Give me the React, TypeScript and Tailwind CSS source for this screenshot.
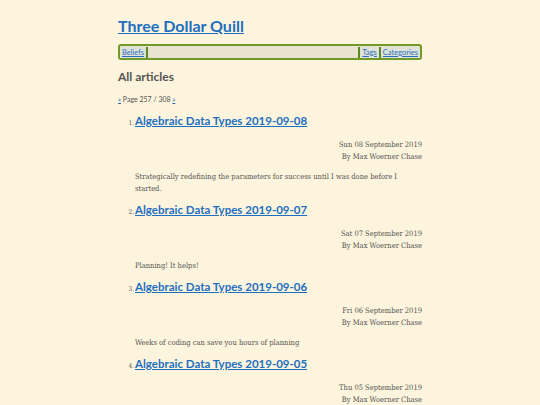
import React from "react";

const articles = [
  { n: 1, title: "Algebraic Data Types 2019-09-08", date: "Sun 08 September 2019", summary: "Strategically redefining the parameters for success until I was done before I started." },
  { n: 2, title: "Algebraic Data Types 2019-09-07", date: "Sat 07 September 2019", summary: "Planning! It helps!" },
  { n: 3, title: "Algebraic Data Types 2019-09-06", date: "Fri 06 September 2019", summary: "Weeks of coding can save you hours of planning" },
  { n: 4, title: "Algebraic Data Types 2019-09-05", date: "Thu 05 September 2019", summary: "" },
];

const head = { fontFamily: "Lato, 'Open Sans', sans-serif" };
const body = { fontFamily: "'DejaVu Serif Condensed', 'DejaVu Serif', serif", fontStretch: "condensed" as const };

export default function App() {
  return (
    <div className="min-h-[405px] w-[540px] bg-[#fcf4dc] overflow-hidden">
      <div className="w-[304px] mx-auto pt-[16px]">
        <a href="#" className="block text-[16px] font-bold text-[#1f6fc1] underline leading-[20px]" style={head}>
          Three Dollar Quill
        </a>
        <div className="mt-[8px] h-[16px] border-2 border-[#6f9a27] rounded-[3px] bg-[#e9e3cf] flex items-center text-[7.5px]" style={head}>
          <a href="#" className="text-[#2a6fb8] underline px-[2px] bg-[#dfe2da] leading-[11px]">Beliefs</a>
          <span className="w-[2px] h-[11px] bg-[#5d8a1c]" />
          <span className="flex-1" />
          <span className="w-[2px] h-[11px] bg-[#5d8a1c]" />
          <a href="#" className="text-[#2a6fb8] underline px-[2px] bg-[#dfe2da] leading-[11px]">Tags</a>
          <span className="w-[2px] h-[11px] bg-[#5d8a1c]" />
          <a href="#" className="text-[#2a6fb8] underline px-[2px] bg-[#dfe2da] leading-[11px]">Categories</a>
        </div>
        <h2 className="mt-[9px] text-[12px] font-bold text-[#555] leading-[16px]" style={head}>All articles</h2>
        <div className="mt-[9px] text-[7px] text-[#555]" style={head}>
          <a href="#" className="underline text-[#2a6fb8]">«</a> Page 257 / 308 <a href="#" className="underline text-[#2a6fb8]">»</a>
        </div>
        <ol className="mt-[6px]">
          {articles.map((a) => (
            <li key={a.n} className="mb-[5px]">
              <div className="flex items-baseline">
                <span className="w-[17px] text-right pr-[1px] text-[6.5px] text-[#555]" style={body}>{a.n}.</span>
                <a href="#" className="text-[11.5px] font-bold text-[#1f6fc1] underline leading-[20px]" style={head}>{a.title}</a>
              </div>
              <div className="pl-[17px] text-[#555]" style={body}>
                <div className="mt-[8px] text-right text-[7.5px] leading-[12.5px]">
                  <div>{a.date}</div>
                  <div>By Max Woerner Chase</div>
                </div>
                {a.summary && <p className="mt-[7px] text-[7.5px] leading-[12px]">{a.summary}</p>}
              </div>
            </li>
          ))}
        </ol>
      </div>
    </div>
  );
}
